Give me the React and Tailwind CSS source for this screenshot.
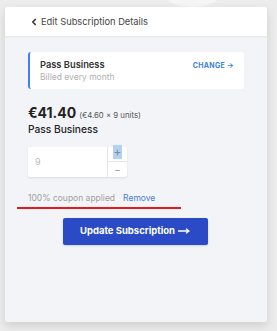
import { ChevronLeft } from 'lucide-react';

const App = () => {
    return (
        <div
            className="relative w-[277px] h-[331px] overflow-hidden bg-[#ececec] pt-[7px] pl-[5px]"
            style={{ fontFamily: 'Inter, "Noto Sans", sans-serif' }}
        >
            {/* fondo decorativo */}
            <div className="absolute left-[150px] top-[-120px] w-[85px] h-[127px] rounded-b-[40px] bg-[#f5f5f5]" />

            <div className="relative w-[262px] h-[315px] rounded-[3px] bg-[#f3f4f8] shadow-[0_4px_10px_rgba(0,0,0,0.12)]">
                {/* Header */}
                <div className="flex items-center h-[29px] bg-white rounded-t-[3px] pl-[24px] shadow-[0_1px_2px_rgba(0,0,0,0.06)]">
                    <ChevronLeft size={10} strokeWidth={4} className="text-[#333] mr-[2px]" />
                    <span className="text-[9.3px] text-[#444]">Edit Subscription Details</span>
                </div>

                <div className="px-[23px] pt-[16px]">
                    {/* Plan */}
                    <div className="flex items-start justify-between h-[37px] bg-white rounded-[3px] border-l-2 border-[#3b82f6] pl-[10px] pr-[10px] pt-[6px]">
                        <div className="flex flex-col">
                            <span className="text-[9.3px] font-semibold text-[#333] leading-[13px]">Pass Business</span>
                            <span className="text-[8.5px] text-[#b0b0b0] leading-[12px]">Billed every month</span>
                        </div>
                        <span className="text-[7px] font-bold text-[#3b7fd8] tracking-[0.3px] mt-[3px]">CHANGE →</span>
                    </div>

                    {/* Precio */}
                    <div className="mt-[15px] flex items-baseline gap-[3px]">
                        <span className="text-[14px] font-bold text-[#222] leading-[18px]">€41.40</span>
                        <span className="text-[7.8px] text-[#555]">(€4.60 × 9 units)</span>
                    </div>
                    <div className="text-[10.2px] font-medium text-[#222] leading-[14px]">Pass Business</div>

                    {/* Cantidad */}
                    <div className="mt-[11px] flex w-[99px] h-[30px] bg-white rounded-[2px] shadow-[0_1px_2px_rgba(0,0,0,0.1)]">
                        <div className="flex-1 flex items-center pl-[7px] text-[9px] text-[#bbb]">9</div>
                        <div className="w-[20px] flex flex-col border-l border-[#e6e6e6]">
                            <div className="flex-1 flex items-start justify-center border-b border-[#e6e6e6]">
                                <span className="bg-[#b3d1f5] text-[#888] text-[12px] leading-[14px] px-[1px] -mt-[2px]">+</span>
                            </div>
                            <div className="flex-1 flex items-center justify-center text-[#999] text-[10px]">−</div>
                        </div>
                    </div>

                    {/* Cupón */}
                    <div className="mt-[15px] flex items-center gap-[8px] text-[8.5px]">
                        <span className="text-[#a0a0a0]">100% coupon applied</span>
                        <span className="text-[#4a7fd0]">Remove</span>
                    </div>

                    {/* Botón */}
                    <div className="mt-[13px] flex justify-center pr-[2px]">
                        <div className="flex items-center justify-center gap-[3px] w-[145px] h-[27px] bg-[#2a4bc5] rounded-[2px] text-white text-[9.5px] font-bold shadow-[0_1px_2px_rgba(0,0,0,0.15)]">
                            Update Subscription
                            <svg width="12" height="6" viewBox="0 0 12 6" fill="none">
                                <path d="M0 3h10M8 0.8 11 3 8 5.2" stroke="white" strokeWidth="1.3" />
                            </svg>
                        </div>
                    </div>
                </div>

                {/* marca roja */}
                <div className="absolute left-[12px] top-[200px] w-[164px] h-[2px] bg-[#e51b1b]" />
            </div>
        </div>
    );
};

export default App;
